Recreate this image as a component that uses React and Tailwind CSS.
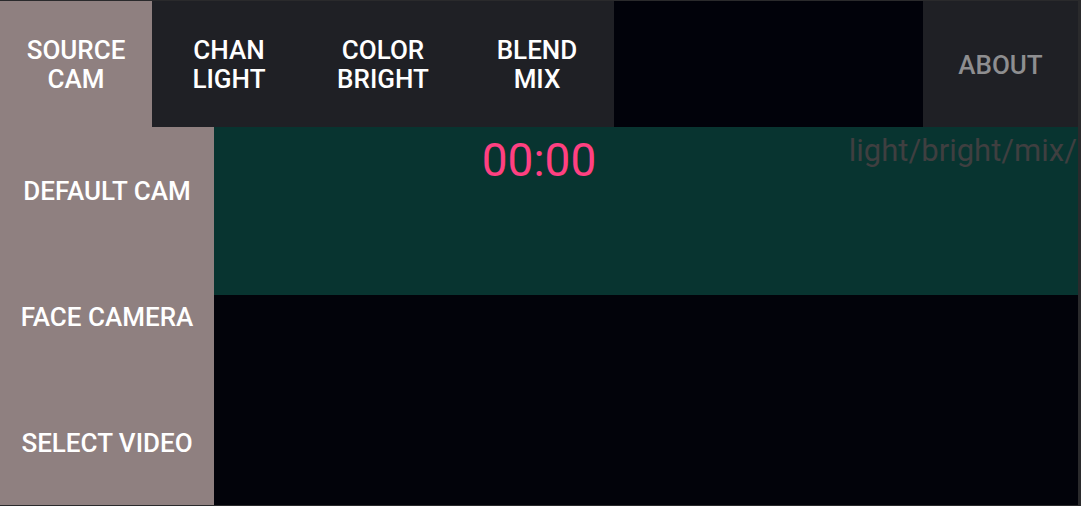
export default function App() {
  const tabs = [
    ["SOURCE", "CAM", true],
    ["CHAN", "LIGHT", false],
    ["COLOR", "BRIGHT", false],
    ["BLEND", "MIX", false],
  ];
  const side = ["DEFAULT CAM", "FACE CAMERA", "SELECT VIDEO"];
  return (
    <div
      className="w-[1081px] h-[506px] bg-[#2a2a2c] pt-px pr-[3px] pb-px flex flex-col overflow-hidden"
      style={{ fontFamily: "Roboto, 'Liberation Sans', sans-serif" }}
    >
      <div className="h-[126px] flex shrink-0">
        {tabs.map(([a, b, active]) => (
          <div
            key={a}
            className={`w-[154px] first:w-[152px] flex flex-col items-center justify-center pt-[2px] text-white text-[26px] font-medium leading-[29px] ${
              active ? "bg-[#8f8080]" : "bg-[#1f2025]"
            }`}
          >
            <span>{a}</span>
            <span>{b}</span>
          </div>
        ))}
        <div className="flex-1 bg-[#01020a]" />
        <div className="w-[155px] bg-[#1f2025] flex items-center justify-center pt-[2px] text-[#8e8e90] text-[26px] font-medium">
          ABOUT
        </div>
      </div>
      <div className="flex-1 flex">
        <div className="w-[214px] bg-[#8f8080] flex flex-col">
          {side.map((s) => (
            <div
              key={s}
              className="flex-1 flex items-center justify-center pt-[3px] text-white text-[26px] font-medium"
            >
              {s}
            </div>
          ))}
        </div>
        <div className="flex-1 flex flex-col">
          <div className="h-[168px] bg-[#083430] relative">
            <div className="pr-[214px] pt-[6px] text-center text-[46px] leading-[54px] text-[#ff4081]">
              00:00
            </div>
            <div className="absolute right-[1px] top-[8px] text-[31px] leading-[31px] text-[#3f3f40] whitespace-nowrap">
              light/bright/mix/
            </div>
          </div>
          <div className="flex-1 bg-[#02030a]" />
        </div>
      </div>
    </div>
  );
}
